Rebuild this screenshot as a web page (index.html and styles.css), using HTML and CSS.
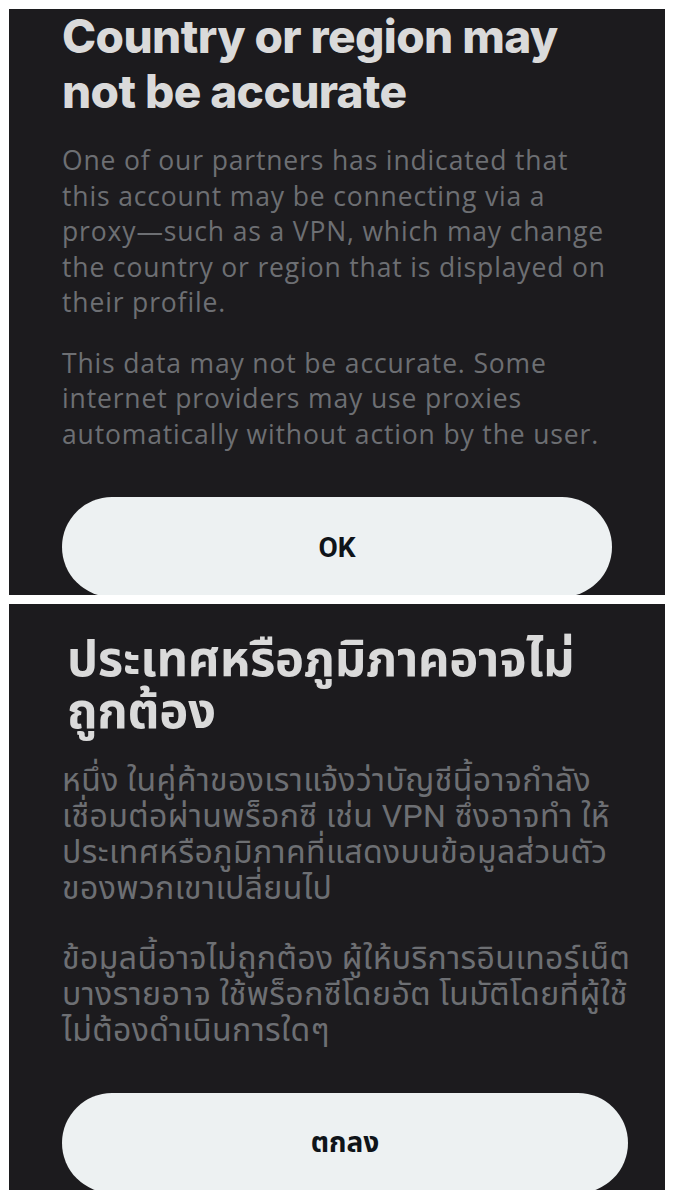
FILE: index.html
```html
<!DOCTYPE html>
<html lang="en">
<head>
    <meta charset="UTF-8">
    <meta name="viewport" content="width=device-width, initial-scale=1.0">
    <title>Country or region notice</title>
    <link rel="stylesheet" href="styles.css">
</head>
<body>

    <!-- English sheet -->
    <div class="sheet sheet-en">
        <h2 class="title">Country or region may<br>not be accurate</h2>
        <p class="text">One of our partners has indicated that<br>this account may be connecting via a<br>proxy—such as a VPN, which may change<br>the country or region that is displayed on<br>their profile.</p>
        <p class="text">This data may not be accurate. Some<br>internet providers may use proxies<br>automatically without action by the user.</p>
        <button class="ok">OK</button>
    </div>

    <!-- Thai sheet -->
    <div class="sheet sheet-th" lang="th">
        <h2 class="title">ประเทศหรือภูมิภาคอาจไม่<br>ถูกต้อง</h2>
        <p class="text">หนึ่ง ในคู่ค้าของเราแจ้งว่าบัญชีนี้อาจกำลัง<br>เชื่อมต่อผ่านพร็อกซี เช่น VPN ซึ่งอาจทำ ให้<br>ประเทศหรือภูมิภาคที่แสดงบนข้อมูลส่วนตัว<br>ของพวกเขาเปลี่ยนไป</p>
        <p class="text">ข้อมูลนี้อาจไม่ถูกต้อง ผู้ให้บริการอินเทอร์เน็ต<br>บางรายอาจ ใช้พร็อกซีโดยอัต โนมัติโดยที่ผู้ใช้<br>ไม่ต้องดำเนินการใดๆ</p>
        <button class="ok">ตกลง</button>
    </div>

</body>
</html>
```

FILE: styles.css
```css
body {
    margin: 0;
    padding: 9px 10px 0 9px;
    background: #ffffff;
    font-family: Roboto, "Noto Sans Thai", "Noto Sans", sans-serif;
}
.sheet {
    background: #1c1b1e;
    height: 586px;
    overflow: hidden;
    padding: 0 30px 0 53px;
    box-sizing: border-box;
    display: flex;
    flex-direction: column;
    align-items: flex-start;
}
.sheet-th {
    margin-top: 9px;
}
.title {
    color: #dadada;
    font-family: Inter, Roboto, sans-serif;
    font-size: 46px;
    font-weight: 800;
    line-height: 55px;
    letter-spacing: -0.6px;
    margin: 0 0 24px;
    white-space: nowrap;
}
.text {
    color: #6d6f73;
    font-family: "Open Sans", Roboto, sans-serif;
    font-size: 26.5px;
    line-height: 35.5px;
    letter-spacing: 0.85px;
    margin: 0 0 25px;
    white-space: nowrap;
}
.ok {
    background: #edf1f2;
    color: #0f1419;
    border: none;
    border-radius: 50px;
    height: 100px;
    width: 550px;
    flex-shrink: 0;
    margin-top: 20px;
    font-family: Roboto, "Noto Sans Thai", sans-serif;
    font-size: 28px;
    font-weight: 700;
    cursor: pointer;
}

/* Thai sheet: the script runs wider and taller */
.sheet-th .title {
    font-family: Roboto, "Noto Sans Thai", sans-serif;
    font-size: 49px;
    font-weight: 700;
    line-height: 52px;
    letter-spacing: -0.3px;
    margin: 30px 0 24px 5px;
}
.sheet-th .text {
    font-family: Roboto, "Noto Sans Thai", sans-serif;
    font-size: 32px;
    line-height: 36px;
    letter-spacing: 0.4px;
    margin-bottom: 34px;
}
.sheet-th .ok {
    width: 566px;
    margin-top: 11px;
}
```
